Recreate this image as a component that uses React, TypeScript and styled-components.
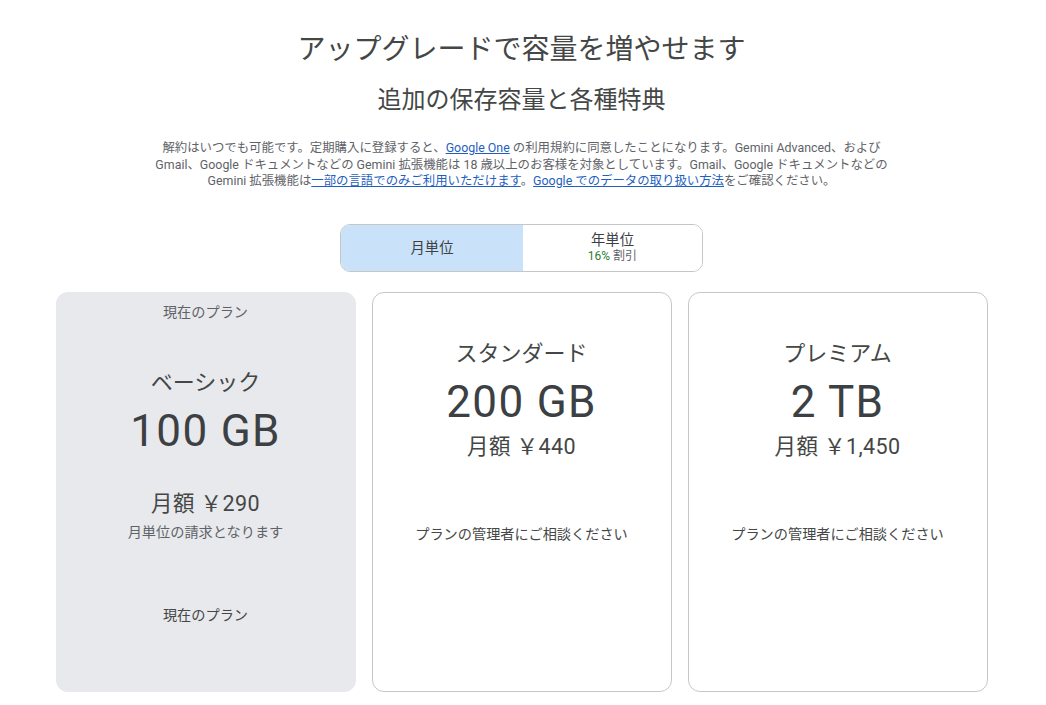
import React from "react";
import styled, { createGlobalStyle } from "styled-components";

const Global = createGlobalStyle`
  html, body { margin: 0; padding: 0; background: #ffffff; }
  body {
    font-family: Roboto, "Noto Sans CJK JP", "Noto Sans", sans-serif;
    color: #3c4043;
  }
`;

const Page = styled.main`
  width: 1046px;
  display: flex;
  flex-direction: column;
  align-items: center;
  padding: 32px 3px 0 0;
  box-sizing: border-box;
`;

const Title = styled.h1`
  margin: 0;
  font-size: 28px;
  line-height: 36px;
  font-weight: 400;
  color: #444746;
`;

const Subtitle = styled.h2`
  margin: 17px 0 0;
  font-size: 24px;
  line-height: 30px;
  font-weight: 400;
  color: #444746;
`;

const Disclaimer = styled.p`
  margin: 25px 0 0;
  font-size: 12.4px;
  line-height: 16.5px;
  color: #5f6368;
  text-align: center;
`;

const Link = styled.a`
  color: #1f5fc0;
  text-decoration: underline;
`;

const Toggle = styled.div`
  margin-top: 34px;
  width: 363px;
  height: 48px;
  box-sizing: border-box;
  border: 1px solid #c4c7c5;
  border-radius: 10px;
  overflow: hidden;
  display: grid;
  grid-template-columns: 182px 1fr;
`;

const ToggleOption = styled.button<{ $active?: boolean }>`
  border: none;
  margin: 0;
  padding: 0;
  font-family: inherit;
  background: ${(p) => (p.$active ? "#c9e2f9" : "#ffffff")};
  color: #3c4043;
  display: flex;
  flex-direction: column;
  align-items: center;
  justify-content: center;
  font-size: 14.3px;
  line-height: 18px;
`;

const Discount = styled.span`
  font-size: 12px;
  line-height: 15px;
  color: #5f6368;
`;

const Green = styled.span`
  color: #2e7d32;
`;

const Cards = styled.div`
  margin-top: 20px;
  display: grid;
  grid-template-columns: repeat(3, 300px);
  gap: 16px;
`;

const Card = styled.section<{ $current?: boolean }>`
  height: 400px;
  box-sizing: border-box;
  border-radius: 12px;
  background: ${(p) => (p.$current ? "#e8e9ec" : "#ffffff")};
  border: ${(p) => (p.$current ? "none" : "1px solid #c4c7c5")};
  display: flex;
  flex-direction: column;
  align-items: center;
  text-align: center;
`;

const TopLabel = styled.div`
  margin-top: 10px;
  font-size: 14.2px;
  line-height: 20px;
  color: #5f6368;
`;

const PlanName = styled.div`
  margin-top: 46px;
  font-size: 22px;
  line-height: 30px;
  color: #444746;
`;

const Size = styled.div`
  margin-top: 7px;
  font-size: 44px;
  line-height: 52px;
  letter-spacing: 1.3px;
  color: #3c4043;
`;

const Price = styled.div<{ $gap: number }>`
  margin-top: ${(p) => p.$gap}px;
  font-size: 21.5px;
  line-height: 28px;
  letter-spacing: 0.4px;
  color: #444746;
`;

const Billing = styled.div`
  margin-top: 4px;
  font-size: 14.2px;
  line-height: 20px;
  color: #5f6368;
`;

const Footer = styled.div`
  margin-top: 63px;
  font-size: 14.2px;
  line-height: 20px;
  color: #444746;
`;

export default function App() {
  return (
    <>
      <Global />
      <Page>
        <Title>アップグレードで容量を増やせます</Title>
        <Subtitle>追加の保存容量と各種特典</Subtitle>
        <Disclaimer>
          解約はいつでも可能です。定期購入に登録すると、<Link href="#">Google One</Link> の利用規約に同意したことになります。Gemini Advanced、および
          <br />
          Gmail、Google ドキュメントなどの Gemini 拡張機能は 18 歳以上のお客様を対象としています。Gmail、Google ドキュメントなどの
          <br />
          Gemini 拡張機能は<Link href="#">一部の言語でのみご利用いただけます</Link>。<Link href="#">Google でのデータの取り扱い方法</Link>をご確認ください。
        </Disclaimer>
        <Toggle>
          <ToggleOption $active>月単位</ToggleOption>
          <ToggleOption>
            年単位
            <Discount>
              <Green>16%</Green> 割引
            </Discount>
          </ToggleOption>
        </Toggle>
        <Cards>
          <Card $current>
            <TopLabel>現在のプラン</TopLabel>
            <PlanName>ベーシック</PlanName>
            <Size>100 GB</Size>
            <Price $gap={33}>月額 ￥290</Price>
            <Billing>月単位の請求となります</Billing>
            <Footer>現在のプラン</Footer>
          </Card>
          <Card>
            <PlanName>スタンダード</PlanName>
            <Size>200 GB</Size>
            <Price $gap={5}>月額 ￥440</Price>
            <Footer>プランの管理者にご相談ください</Footer>
          </Card>
          <Card>
            <PlanName>プレミアム</PlanName>
            <Size>2 TB</Size>
            <Price $gap={5}>月額 ￥1,450</Price>
            <Footer>プランの管理者にご相談ください</Footer>
          </Card>
        </Cards>
      </Page>
    </>
  );
}
